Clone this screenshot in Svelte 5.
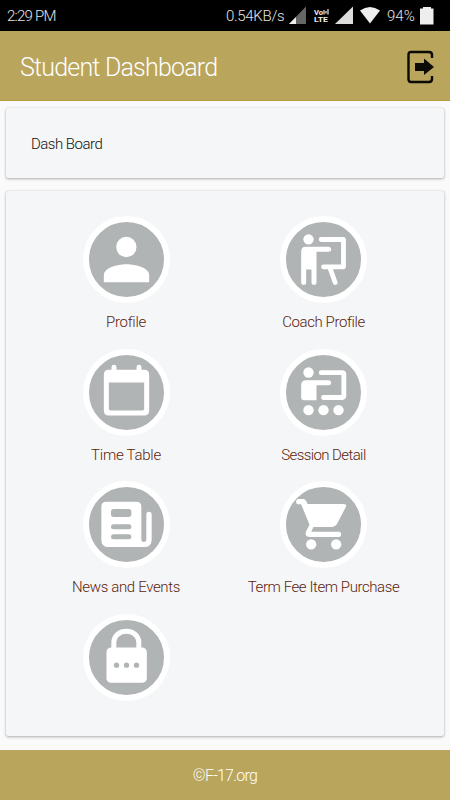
<script lang="ts">
    const items = [
        { icon: 'profile', label: 'Profile', box: '23.5 32.5 261 261', spacing: -0.3 },
        { icon: 'coach', label: 'Coach Profile', box: '120.5 32.5 261 261', spacing: -0.4 },
        { icon: 'calendar', label: 'Time Table', box: '23.5 24.5 261 261', spacing: -0.25 },
        { icon: 'session', label: 'Session Detail', box: '30.5 24.5 261 261', spacing: -0.6 },
        { icon: 'news', label: 'News and Events', box: '54 18 261 261', spacing: -0.35 },
        { icon: 'cart', label: 'Term Fee Item Purchase', box: '120.5 18 261 261', spacing: -0.42 },
        { icon: 'lock', label: '', box: '23.5 24.5 261 261', spacing: 0 }
    ];
</script>

<div class="screen">
    <div class="status">
        <span class="time">2:29 PM</span>
        <span class="speed">0.54KB/s</span>
        <svg class="signals" width="148" height="31" viewBox="0 0 148 31">
            <path d="M17 6.5V24H0Z" fill="#666" />
            <path d="M7 17V24H0Z" fill="#eee" />
            <text x="25" y="14.6" textLength="9" lengthAdjust="spacingAndGlyphs">Vo</text>
            <path d="M35 10V14.600M37 11V13.500M39 9V14.600" stroke="#eee" stroke-width="1.2" />
            <text x="25" y="22.3" textLength="14" lengthAdjust="spacingAndGlyphs">LTE</text>
            <path d="M64 6.5V24H46Z" fill="#ddd" />
            <path d="M71 10.5Q81 3.5 91 10.5L81 23.5Z" fill="#eee" />
            <path d="M134 7H142V8.5H144.5V24.5H131V8.5H134Z" fill="#eee" />
        </svg>
        <span class="percent">94%</span>
    </div>

    <header>
        <h1>Student Dashboard</h1>
        <button class="logout" aria-label="Log out">
            <svg width="30" height="36" viewBox="0 0 30 36">
                <path d="M26 9V6Q26 3 23 3H5Q2.5 3 2.5 6V30Q2.5 33 5 33H23Q26 33 26 30V27" fill="none" stroke="#0b0a05" stroke-width="2.4" />
                <path d="M9 14H18V9.5L28 18L18 26V22H9Z" fill="#0b0a05" />
            </svg>
        </button>
    </header>

    <main>
        <section class="card title">Dash Board</section>
        <section class="card grid">
            {#each items as item}
                <div class="item">
                    <div class="circle">
                        <svg viewBox={item.box} fill="#fff" stroke-linecap="round" stroke-linejoin="round">
                            {#if item.icon === 'profile'}
                                <circle cx="153.5" cy="125.5" r="30.5" />
                                <path d="M86 231V209C86 189 124 177 154 177S222 189 222 209V231Z" />
                            {:else if item.icon === 'coach'}
                                <circle cx="206" cy="102.500" r="15.500" />
                                <path d="M197 125H266Q274 125 274 132.500T266 140H230V231Q230 239 222.500 239T215 231V193H199V231Q199 239 191.500 239T184 231V139Q184 125 197 125Z" />
                                <path d="M244 103H311V185H251M270 187L286 232" fill="none" stroke="#fff" stroke-width="14.500" />
                            {:else if item.icon === 'calendar'}
                                <path fill-rule="evenodd" d="M109 87V79Q109 72 116.500 72T124 79V87H184V79Q184 72 191.500 72T199 79V87H207Q222 87 222 102V209Q222 224 207 224H101Q86 224 86 209V102Q86 87 101 87ZM101 125V204Q101 209 106 209H202Q207 209 207 204V125Z" />
                            {:else if item.icon === 'session'}
                                <circle cx="116" cy="95" r="15.500" />
                                <path d="M109 118H176Q184 118 184 125.500T176 133H140V178H101Q94 178 94 171V133Q94 118 109 118Z" />
                                <path d="M154 95.500H217Q222 95.500 222 100V165Q222 170 217 170H161" fill="none" stroke="#fff" stroke-width="14.500" />
                                <circle cx="116" cy="208" r="15.500" />
                                <circle cx="161" cy="208" r="15.500" />
                                <circle cx="206" cy="208" r="15.500" />
                            {:else if item.icon === 'news'}
                                <path d="M124 80H214Q229 80 229 95V193Q229 201 236.500 201T244 193V118Q244 110 252 110T260 118V194Q260 216 238 216H131Q109 216 109 194V95Q109 80 124 80Z" />
                                <g fill="#b0b4b5">
                                    <rect x="138" y="102" width="61" height="24" rx="8" />
                                    <rect x="138" y="148" width="61" height="15" rx="7.5" />
                                    <rect x="138" y="178" width="61" height="15" rx="7.5" />
                                </g>
                            {:else if item.icon === 'cart'}
                                <path d="M176 72H190Q196 72 199 78L203 87H312Q322 87 318 96L291 148Q286 156 277 156H221L214 170H297Q304 170 304 178T297 186H211Q193 186 199 169L209 149L184 88H176Q169 88 169 80T176 72Z" />
                                <circle cx="214" cy="208" r="15.500" />
                                <circle cx="289" cy="208" r="15.500" />
                            {:else}
                                <path d="M116 130V111C116 65 191 65 191 111V130" fill="none" stroke="#fff" stroke-width="15" />
                                <rect x="94" y="125" width="121" height="106" rx="14" />
                                <g fill="#b0b4b5">
                                    <circle cx="124" cy="178" r="8" />
                                    <circle cx="154" cy="178" r="8" />
                                    <circle cx="184" cy="178" r="8" />
                                </g>
                            {/if}
                        </svg>
                    </div>
                    <span class="label" style="letter-spacing: {item.spacing}px">{item.label}</span>
                </div>
            {/each}
        </section>
    </main>

    <footer>©F-17.org</footer>
</div>

<style>
    :global(body) {
        background: #fafafa;
    }

    .screen {
        display: flex;
        flex-direction: column;
        width: 450px;
        height: 800px;
        overflow: hidden;
        background: #fafafa;
        font-family: Roboto, "Liberation Sans", sans-serif;
        font-weight: 300;
    }

    .status {
        display: flex;
        align-items: center;
        height: 31px;
        padding-left: 7px;
        background: #000;
        color: #e4e4e4;
        font-size: 15px;
        line-height: 31px;
        white-space: nowrap;
        position: relative;
    }

    .time {
        width: 219px;
        letter-spacing: -0.75px;
        padding-top: 2px;
    }

    .speed {
        width: 63px;
        letter-spacing: -0.3px;
        padding-top: 2px;
    }

    .signals {
        flex: none;
    }

    .signals text {
        font-size: 6.5px;
        font-weight: 700;
        fill: #eee;
    }

    .percent {
        position: absolute;
        left: 387px;
        top: 1px;
    }

    header {
        box-sizing: border-box;
        display: flex;
        justify-content: space-between;
        align-items: center;
        height: 70px;
        padding: 3px 14px 0 20px;
        background: #baa55c;
        border-bottom: 1px solid #b79a3e;
        color: #fff;
    }

    h1 {
        margin: 0;
        padding-top: 1px;
        font-size: 25px;
        font-weight: 300;
        letter-spacing: -0.8px;
    }

    .logout {
        display: flex;
        padding: 0;
        border: 0;
        background: none;
    }

    main {
        flex: 1;
        padding: 7px 6px 0;
    }

    .card {
        box-sizing: border-box;
        background: #f4f6f8;
        border-radius: 2px;
        box-shadow: 0 1px 3px rgba(0, 0, 0, 0.3), 0 0 1px rgba(0, 0, 0, 0.2);
    }

    .title {
        height: 70px;
        margin-bottom: 13px;
        padding-left: 25px;
        color: #111;
        font-size: 15px;
        line-height: 72px;
        letter-spacing: -0.5px;
    }

    .grid {
        display: grid;
        grid-template-columns: 198px 197px;
        grid-auto-rows: 132.5px;
        height: 545px;
        padding: 25px 21px 0;
    }

    .item {
        display: flex;
        flex-direction: column;
        align-items: center;
    }

    .circle {
        box-sizing: border-box;
        width: 87px;
        height: 87px;
        border: 6px solid #fff;
        border-radius: 50%;
        background: #b0b4b5;
    }

    .circle svg {
        display: block;
        width: 87px;
        height: 87px;
        margin: -6px;
    }

    .label {
        margin-top: 9px;
        color: #5c1d0c;
        font-size: 15px;
        line-height: 20px;
        white-space: nowrap;
    }

    footer {
        height: 50px;
        background: #baa55c;
        color: #fff;
        font-size: 16px;
        line-height: 51px;
        text-align: center;
        letter-spacing: -0.75px;
    }
</style>
